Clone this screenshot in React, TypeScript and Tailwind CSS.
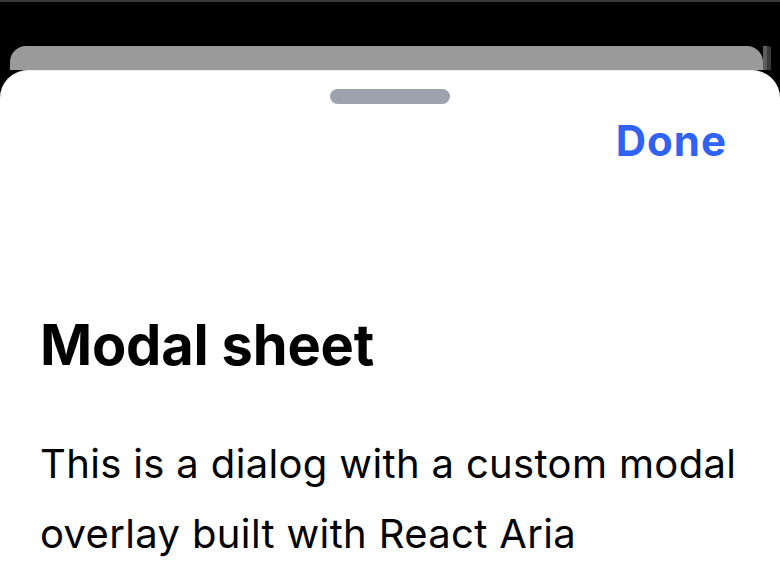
export default function App() {
  return (
    <div
      className="w-[780px] h-[578px] bg-black flex flex-col overflow-hidden"
      style={{ fontFamily: "Inter, 'Noto Sans', sans-serif" }}
    >
      <div className="h-[2px] bg-[#3a3a3a]" />
      <div className="h-[44px]" />
      {/* page behind the sheet */}
      <div className="h-[24px] ml-[10px] mr-[9px] flex">
        <div className="flex-1 bg-[#9a9a9a] rounded-tl-[16px] rounded-tr-[16px]" />
        <div className="w-[8px] flex">
          <div className="w-[4px] bg-[#5c5c5c]" />
          <div className="w-[4px] bg-[#3a3a3a] rounded-tr-[3px]" />
        </div>
      </div>
      {/* sheet */}
      <div className="flex-1 bg-white rounded-t-[28px] border-t border-[#ececec] flex flex-col">
        <div className="flex justify-center pt-[18px]">
          <div className="w-[120px] h-[15px] rounded-full bg-[#9ca3af]" />
        </div>
        <div className="flex justify-end pr-[53px] mt-[12px]">
          <button className="text-[42px] leading-[50px] font-bold text-[#3062f4] tracking-[1px]">
            Done
          </button>
        </div>
        <div className="px-[40px] mt-[145px]">
          <h2 className="text-[56px] leading-[68px] font-bold text-black tracking-[-0.2px]">
            Modal sheet
          </h2>
          <p className="mt-[50px] text-[40px] leading-[70px] text-black tracking-[0.35px]">
            This is a dialog with a custom modal overlay built with React Aria
          </p>
        </div>
      </div>
    </div>
  );
}
